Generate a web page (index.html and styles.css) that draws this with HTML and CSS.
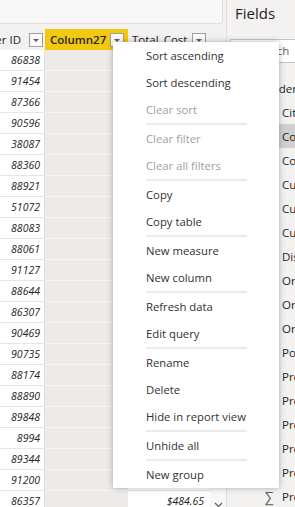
FILE: index.html
```html
<!DOCTYPE html>
<html lang="en">
<head>
    <meta charset="UTF-8">
    <meta name="viewport" content="width=device-width, initial-scale=1.0">
    <title>Data view - Column menu</title>
    <link rel="stylesheet" href="styles.css">
</head>
<body>
    <div class="app">
        <!-- Data grid -->
        <div class="data-view">
            <div class="formula-bar"></div>
            <div class="grid-row header-row">
                <div class="hcell hcell-id">
                    <span class="htext">Customer ID</span>
                    <span class="filter-btn"></span>
                </div>
                <div class="hcell selected">
                    <span class="htext">Column27</span>
                    <span class="filter-btn"></span>
                </div>
                <div class="hcell">
                    <span class="htext">Total_Cost</span>
                    <span class="filter-btn"></span>
                </div>
                <div class="hcell scroll-cell"></div>
            </div>
            <div id="rows"></div>
        </div>

        <!-- Fields pane -->
        <div class="fields-pane">
            <h2>Fields</h2>
            <div class="search-box">Search</div>
            <ul class="field-list" id="field-list"></ul>
        </div>

        <!-- Column context menu -->
        <ul class="context-menu">
            <li>Sort ascending</li>
            <li>Sort descending</li>
            <li class="disabled">Clear sort</li>
            <li class="sep"></li>
            <li class="disabled">Clear filter</li>
            <li class="disabled">Clear all filters</li>
            <li class="sep"></li>
            <li>Copy</li>
            <li>Copy table</li>
            <li class="sep"></li>
            <li>New measure</li>
            <li>New column</li>
            <li class="sep"></li>
            <li>Refresh data</li>
            <li>Edit query</li>
            <li class="sep"></li>
            <li>Rename</li>
            <li>Delete</li>
            <li>Hide in report view</li>
            <li class="sep"></li>
            <li>Unhide all</li>
            <li class="sep"></li>
            <li>New group</li>
        </ul>
    </div>

    <script>
        const customerIds = [86838, 91454, 87366, 90596, 38087, 88360, 88921, 51072, 88083, 88061,
            91127, 88644, 86307, 90469, 90735, 88174, 88890, 89848, 8994, 89344, 91200, 86357];

        const fields = [
            { name: 'Orders', table: true },
            { name: 'City' },
            { name: 'Country', active: true },
            { name: 'Column27' },
            { name: 'Customer ID' },
            { name: 'Customer Name' },
            { name: 'Customer Segment' },
            { name: 'Discount' },
            { name: 'Order Date' },
            { name: 'Order ID' },
            { name: 'Order Priority' },
            { name: 'Postal Code' },
            { name: 'Product Base Margin' },
            { name: 'Product Category' },
            { name: 'Product Container' },
            { name: 'Product Name' },
            { name: 'Product Sub-Category' },
            { name: 'Profit', sum: true }
        ];

        // Render grid rows
        const rowsEl = document.getElementById('rows');
        customerIds.forEach((id, i) => {
            const row = document.createElement('div');
            row.className = 'grid-row data-row';

            const idCell = document.createElement('div');
            idCell.className = 'cell cell-id';
            idCell.textContent = id;

            const emptyCell = document.createElement('div');
            emptyCell.className = 'cell cell-selected';

            const costCell = document.createElement('div');
            costCell.className = 'cell cell-cost';
            if (i === customerIds.length - 1) costCell.textContent = '$484.65';

            const scrollCell = document.createElement('div');
            scrollCell.className = 'cell scroll-cell';
            if (i === customerIds.length - 1) scrollCell.innerHTML =
                '<svg width="9" height="6" viewBox="0 0 9 6"><path d="M1 1l3.5 3.5L8 1" fill="none" stroke="#605e5c" stroke-width="1.2"/></svg>';

            row.append(idCell, emptyCell, costCell, scrollCell);
            rowsEl.appendChild(row);
        });

        // Render field list
        const listEl = document.getElementById('field-list');
        fields.forEach(field => {
            const li = document.createElement('li');
            li.className = 'field';
            if (field.table) li.classList.add('table-name');
            if (field.active) li.classList.add('active');

            const icon = document.createElement('span');
            icon.className = 'field-icon';
            if (field.sum) icon.textContent = '∑';

            const label = document.createElement('span');
            label.textContent = field.name;

            li.append(icon, label);
            listEl.appendChild(li);
        });
    </script>
</body>
</html>
```

FILE: styles.css
```css
body {
    margin: 0;
    font-family: "Open Sans", "Noto Sans", sans-serif;
    color: #252423;
    background: #f3f2f1;
    width: 295px;
    height: 507px;
    overflow: hidden;
}

.app {
    display: flex;
    height: 507px;
    position: relative;
}

/* Data grid */
.data-view {
    width: 226px;
    flex: none;
    border-right: 1px solid #e1dfdd;
    overflow: hidden;
}

.formula-bar {
    width: 223px;
    height: 24px;
    box-sizing: border-box;
    background: #f8f8f8;
    border-right: 1px solid #e1dfdd;
    border-bottom: 1px solid #e1dfdd;
    border-bottom-right-radius: 4px;
    margin-bottom: 5px;
}

.grid-row {
    display: grid;
    grid-template-columns: 45px 83px 82px 16px;
}

.header-row {
    height: 21px;
}

.hcell {
    display: flex;
    align-items: center;
    overflow: hidden;
    white-space: nowrap;
    font-size: 11.5px;
    padding: 0 4px 0 4px;
}

.hcell .htext {
    flex: 1;
    overflow: hidden;
}

.hcell-id {
    justify-content: flex-end;
    padding-right: 2px;
}

.hcell-id .htext {
    flex: none;
    margin-right: 8px;
}

.hcell.selected {
    background: #f2c811;
    font-weight: 600;
    padding-left: 5px;
    padding-right: 4px;
}

.filter-btn {
    flex: none;
    width: 14px;
    height: 14px;
    box-sizing: border-box;
    border: 1px solid #a19f9d;
    background: #fbfbfb;
    position: relative;
}

.filter-btn::after {
    content: "";
    position: absolute;
    left: 3px;
    top: 5px;
    border-left: 3px solid transparent;
    border-right: 3px solid transparent;
    border-top: 3px solid #605e5c;
}

.scroll-cell {
    padding: 0;
}

.data-row {
    height: 21px;
}

.cell {
    box-sizing: border-box;
    border-bottom: 1px solid #e8e6e4;
    font-size: 10.5px;
    font-style: italic;
    line-height: 20px;
    text-align: right;
    white-space: nowrap;
}

.cell-id {
    background: #fff;
    border-right: 1px solid #e1dfdd;
    padding-right: 4px;
}

.cell-selected {
    background: #edebe9;
    border-bottom-color: #f5f4f3;
}

.cell-cost {
    background: #fff;
    padding-right: 6px;
}

.cell.scroll-cell {
    background: #f8f8f8;
    border-bottom: none;
    text-align: center;
}

.cell.scroll-cell svg {
    vertical-align: middle;
    margin-top: 6px;
}

/* Fields pane */
.fields-pane {
    flex: 1;
    min-width: 0;
    padding-left: 8px;
}

.fields-pane h2 {
    margin: 3px 0 0 0;
    font-size: 15px;
    font-weight: 400;
    line-height: 21px;
    color: #252423;
}

.search-box {
    margin: 15px 0 0 -5px;
    height: 24px;
    box-sizing: border-box;
    background: #fff;
    border: 1px solid #c8c6c4;
    border-right: none;
    padding-left: 22px;
    font-size: 11.5px;
    line-height: 22px;
    color: #605e5c;
    white-space: nowrap;
}

.field-list {
    list-style: none;
    margin: 13px 0 0 -8px;
    padding: 0;
}

.field {
    display: flex;
    align-items: center;
    height: 24px;
    font-size: 11.5px;
    white-space: nowrap;
    padding-left: 38px;
}

.field-icon {
    width: 17px;
    flex: none;
    font-size: 14px;
    color: #605e5c;
}

.field.table-name .field-icon {
    width: 0;
}

.field.active {
    background: #d2d0ce;
}

/* Context menu */
.context-menu {
    position: absolute;
    left: 113px;
    top: 42px;
    width: 166px;
    margin: 0;
    padding: 0;
    list-style: none;
    background: #fff;
    box-shadow: 0 0 6px rgba(0, 0, 0, 0.3);
}

.context-menu li {
    height: 27px;
    line-height: 27px;
    padding-left: 33px;
    font-size: 11.3px;
    color: #323130;
    white-space: nowrap;
}

.context-menu li.disabled {
    color: #a19f9d;
}

.context-menu li.sep {
    height: 2px;
    padding: 0;
    margin: 0 32px 0 33px;
    background: #edebe9;
}
```
